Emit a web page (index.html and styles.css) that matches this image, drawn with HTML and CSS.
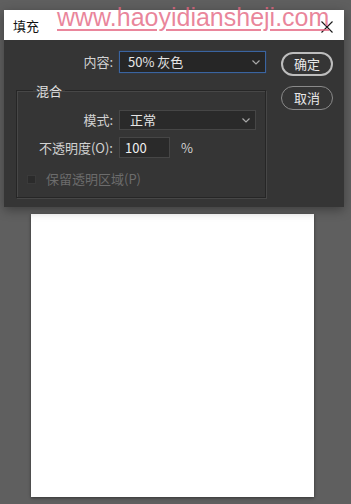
FILE: index.html
```html
<!DOCTYPE html>
<html lang="zh">
<head>
<meta charset="utf-8">
<title>填充</title>
<link rel="stylesheet" href="styles.css">
</head>
<body>
<div class="dialog">
  <div class="titlebar">
    <span class="title">填充</span>
    <svg class="close" width="12" height="12" viewBox="0 0 12 12"><path d="M0.5 0.5 L11.5 11.5 M11.5 0.5 L0.5 11.5" stroke="#1a1a1a" stroke-width="1.1" fill="none"/></svg>
  </div>
  <div class="content">
    <div class="main">
      <div class="row">
        <span class="lbl lbl-top">内容:</span>
        <div class="select select-focus">
          <span>50% 灰色</span>
          <svg class="chev" width="8" height="5" viewBox="0 0 8 5"><path d="M0.5 0.5 L4 4 L7.5 0.5" stroke="#a8a8a8" stroke-width="1.2" fill="none"/></svg>
        </div>
      </div>
      <fieldset class="group">
        <legend>混合</legend>
        <div class="row row-mode">
          <span class="lbl">模式:</span>
          <div class="select select-mode">
            <span>正常</span>
            <svg class="chev" width="8" height="5" viewBox="0 0 8 5"><path d="M0.5 0.5 L4 4 L7.5 0.5" stroke="#a8a8a8" stroke-width="1.2" fill="none"/></svg>
          </div>
        </div>
        <div class="row row-opacity">
          <span class="lbl">不透明度(O):</span>
          <div class="input">100</div>
          <span class="pct">%</span>
        </div>
        <div class="check-row">
          <span class="checkbox"></span>
          <span class="check-text">保留透明区域(P)</span>
        </div>
      </fieldset>
    </div>
    <div class="buttons">
      <div class="btn btn-primary">确定</div>
      <div class="btn">取消</div>
    </div>
  </div>
</div>
<div class="canvas"></div>
<div class="watermark">www.haoyidiansheji.com</div>
</body>
</html>
```

FILE: styles.css
```css
html, body {
  margin: 0;
  padding: 0;
}
body {
  background: #5f5f5f;
  width: 351px;
  height: 504px;
  overflow: hidden;
  position: relative;
  font-family: "Noto Sans CJK SC", "Liberation Sans", sans-serif;
  font-size: 13px;
}
.dialog {
  margin: 10px 0 0 4px;
  width: 340px;
  background: #353535;
  box-shadow: 0 3px 10px rgba(0, 0, 0, 0.35);
  position: relative;
}
.titlebar {
  height: 30px;
  background: #ffffff;
  display: flex;
  align-items: center;
  justify-content: space-between;
  padding: 2px 11px 0 9px;
  box-sizing: border-box;
}
.title {
  color: #111;
  font-size: 13px;
  line-height: 16px;
}
.close {
  display: block;
  margin-top: 2px;
}
.content {
  display: flex;
  height: 167px;
  box-sizing: border-box;
  padding-top: 11px;
}
.main {
  width: 262px;
}
.row {
  display: flex;
  align-items: center;
}
.lbl {
  width: 96px;
  text-align: right;
  margin-right: 6px;
  color: #d2d2d2;
  line-height: 16px;
}
.lbl-top {
  width: 109px;
}
.select {
  box-sizing: border-box;
  display: flex;
  align-items: center;
  justify-content: space-between;
  background: #2a2a2a;
  border: 1px solid #464646;
  color: #e6e6e6;
  line-height: 16px;
}
.select-focus {
  width: 147px;
  height: 22px;
  padding: 0 5px 0 8px;
  border-color: #3a64a0;
  background: #262626;
  box-shadow: 0 0 1px #2b4d80;
}
.select-mode {
  width: 137px;
  height: 20px;
  padding: 0 5px 0 10px;
}
.chev {
  display: block;
}
.group {
  margin: 9px 0 0 12px;
  padding: 0 0 10px 0;
  width: 250px;
  box-sizing: border-box;
  border: 1px solid #262626;
  box-shadow: 1px 1px 0 #474747, inset 1px 1px 0 #474747;
}
.group legend {
  margin-left: 16px;
  padding: 0 3px;
  color: #e0e0e0;
  line-height: 17px;
}
.row-mode {
  margin-top: 11px;
}
.row-opacity {
  margin-top: 7px;
}
.input {
  box-sizing: border-box;
  width: 51px;
  height: 21px;
  background: #2a2a2a;
  border: 1px solid #464646;
  color: #f0f0f0;
  padding-left: 5px;
  line-height: 19px;
}
.pct {
  margin-left: 11px;
  color: #d2d2d2;
}
.check-row {
  display: flex;
  align-items: center;
  margin-top: 13px;
  padding-left: 10px;
}
.checkbox {
  width: 9px;
  height: 9px;
  background: #2b2b2b;
  border: 1px solid #3a3a3a;
  box-sizing: border-box;
}
.check-text {
  margin-left: 10px;
  color: #6c6c6c;
  line-height: 16px;
}
.buttons {
  margin-left: 15px;
  padding-top: 1px;
  display: flex;
  flex-direction: column;
  gap: 10px;
}
.btn {
  box-sizing: border-box;
  width: 52px;
  height: 24px;
  border: 1.5px solid #8a8a8a;
  border-radius: 12px;
  color: #e8e8e8;
  display: flex;
  align-items: center;
  justify-content: center;
  line-height: 16px;
}
.btn-primary {
  border: 2px solid #bdbdbd;
}
.canvas {
  margin: 7px 0 0 31px;
  width: 283px;
  height: 283px;
  background: #ffffff;
  box-shadow: 0 1px 3px rgba(0, 0, 0, 0.45);
}
.watermark {
  position: absolute;
  left: 57px;
  top: 5px;
  font-family: "Liberation Sans", sans-serif;
  font-size: 25px;
  line-height: 25px;
  color: rgba(228, 100, 128, 0.78);
  text-decoration: underline;
  text-decoration-thickness: 1.5px;
  text-underline-offset: 3px;
  white-space: nowrap;
}
```
